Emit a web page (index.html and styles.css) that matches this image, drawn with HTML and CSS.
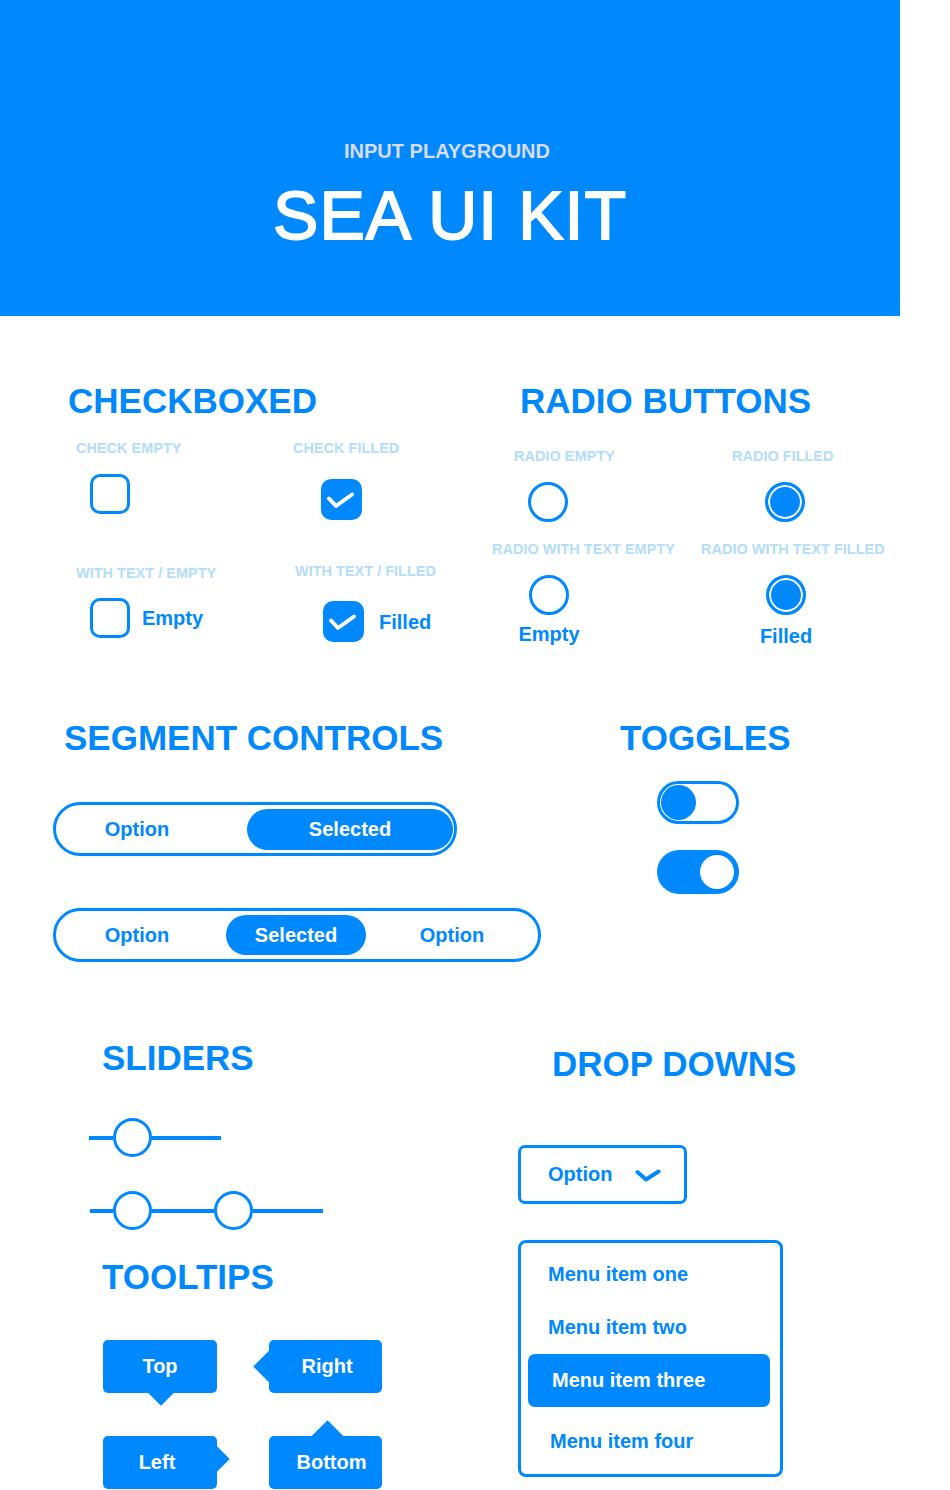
FILE: index.html
```html
<!DOCTYPE html>
<html lang="en">
<head>
<meta charset="utf-8">
<title>Sea UI Kit</title>
<link rel="stylesheet" href="styles.css">
</head>
<body>
<header class="hero">
  <p class="hero-sub">INPUT PLAYGROUND</p>
  <h1 class="hero-title">SEA UI KIT</h1>
</header>

<main class="page">
  <div class="row row-1">
    <section class="col-checks">
      <h2 class="heading">CHECKBOXED</h2>
      <div class="check-grid">
        <div class="cell cell-a">
          <div class="label">CHECK EMPTY</div>
          <span class="box"></span>
        </div>
        <div class="cell cell-b">
          <div class="label">CHECK FILLED</div>
          <span class="box on"><svg width="41" height="41" viewBox="0 0 41 41"><polyline points="8,19.5 15,27 31,15.5" fill="none" stroke="#fff" stroke-width="4" stroke-linecap="round" stroke-linejoin="round"/></svg></span>
        </div>
        <div class="cell cell-c">
          <div class="label">WITH TEXT / EMPTY</div>
          <div class="check-line">
            <span class="box"></span>
            <span class="check-text">Empty</span>
          </div>
        </div>
        <div class="cell cell-d">
          <div class="label">WITH TEXT / FILLED</div>
          <div class="check-line">
            <span class="box on"><svg width="41" height="41" viewBox="0 0 41 41"><polyline points="8,19.5 15,27 31,15.5" fill="none" stroke="#fff" stroke-width="4" stroke-linecap="round" stroke-linejoin="round"/></svg></span>
            <span class="check-text">Filled</span>
          </div>
        </div>
      </div>
    </section>

    <section class="col-radios">
      <h2 class="heading">RADIO BUTTONS</h2>
      <div class="radio-grid">
        <div class="cell r-1">
          <div class="label">RADIO EMPTY</div>
          <span class="radio"></span>
        </div>
        <div class="cell r-2">
          <div class="label">RADIO FILLED</div>
          <span class="radio on"></span>
        </div>
        <div class="cell r-3">
          <div class="label">RADIO WITH TEXT EMPTY</div>
          <div class="radio-item">
            <span class="radio"></span>
            <span class="radio-text">Empty</span>
          </div>
        </div>
        <div class="cell r-4">
          <div class="label">RADIO WITH TEXT FILLED</div>
          <div class="radio-item">
            <span class="radio on"></span>
            <span class="radio-text">Filled</span>
          </div>
        </div>
      </div>
    </section>
  </div>

  <div class="row row-2">
    <section class="col-seg">
      <h2 class="heading">SEGMENT CONTROLS</h2>
      <div class="segment seg-two">
        <span class="seg-opt">Option</span>
        <span class="seg-sel">Selected</span>
      </div>
      <div class="segment seg-three">
        <span class="seg-opt">Option</span>
        <span class="seg-sel">Selected</span>
        <span class="seg-opt seg-opt-r">Option</span>
      </div>
    </section>

    <section class="col-toggles">
      <h2 class="heading">TOGGLES</h2>
      <div class="toggle"><span class="knob"></span></div>
      <div class="toggle on"><span class="knob"></span></div>
    </section>
  </div>

  <div class="row row-3">
    <section class="col-left">
      <h2 class="heading">SLIDERS</h2>
      <div class="slider slider-1">
        <span class="track" style="width:24px"></span>
        <span class="thumb"></span>
        <span class="track" style="width:69px"></span>
      </div>
      <div class="slider slider-2">
        <span class="track" style="width:23px"></span>
        <span class="thumb"></span>
        <span class="track" style="width:62px"></span>
        <span class="thumb"></span>
        <span class="track" style="width:70px"></span>
      </div>

      <h2 class="heading tooltips-heading">TOOLTIPS</h2>
      <div class="tip-grid">
        <div class="tip tip-top">Top</div>
        <div class="tip tip-right">Right</div>
        <div class="tip tip-left">Left</div>
        <div class="tip tip-bottom">Bottom</div>
      </div>
    </section>

    <section class="col-right">
      <h2 class="heading">DROP DOWNS</h2>
      <div class="dropdown">
        <span>Option</span>
        <svg width="26" height="14" viewBox="0 0 26 14"><polyline points="2.5,3 11,10.5 23.5,2.5" fill="none" stroke="#0088ff" stroke-width="4" stroke-linecap="round" stroke-linejoin="round"/></svg>
      </div>
      <div class="menu">
        <div class="menu-item">Menu item one</div>
        <div class="menu-item">Menu item two</div>
        <div class="menu-item active">Menu item three</div>
        <div class="menu-item last">Menu item four</div>
      </div>
    </section>
  </div>
</main>
</body>
</html>
```

FILE: styles.css
```css
* { box-sizing: border-box; }

body {
  margin: 0;
  background: #ffffff;
  font-family: "Liberation Sans", Arial, sans-serif;
  color: #0088ff;
}

/* ---------- header ---------- */
.hero {
  width: 900px;
  height: 316px;
  background: #0088ff;
  padding-top: 139px;
  text-align: center;
}
.hero-sub {
  margin: 0;
  font-size: 20px;
  line-height: 24px;
  font-weight: 700;
  color: #d8dcf6;
  padding-right: 6px;
}
.hero-title {
  margin: 16px 0 0;
  font-size: 68px;
  line-height: 72px;
  font-weight: 400;
  letter-spacing: 1px;
  -webkit-text-stroke: 1.8px #ffffff;
  color: #ffffff;
}

/* ---------- common ---------- */
.heading {
  margin: 0;
  font-size: 35px;
  line-height: 40px;
  font-weight: 700;
  color: #0088ff;
  white-space: nowrap;
}
.label {
  font-size: 14.5px;
  line-height: 18px;
  font-weight: 700;
  color: #b3ddfc;
  white-space: nowrap;
}
.row { display: flex; }

/* ---------- row 1 ---------- */
.row-1 { padding-top: 65px; }
.col-checks { width: 492px; padding-left: 68px; }
.col-radios { flex: 1; }
.col-radios .heading { margin-left: 28px; }

.check-grid {
  display: grid;
  grid-template-columns: 217px 200px;
  row-gap: 42px;
  margin: 18px 0 0 8px;
  align-items: start;
}
.cell { display: flex; flex-direction: column; align-items: flex-start; }

.box {
  display: block;
  width: 40px;
  height: 40px;
  border: 3.5px solid #0088ff;
  border-radius: 10px;
}
.box.on {
  width: 41px;
  height: 41px;
  border: none;
  background: #0088ff;
}
.box svg { display: block; }

.cell-a .box { margin: 17px 0 0 14px; }
.cell-b .box { margin: 22px 0 0 28px; }
.cell-c .label { margin-top: 2px; }
.cell-c .check-line { margin: 16px 0 0 14px; }
.cell-d .label { margin-left: 2px; }
.cell-d .check-line { margin: 21px 0 0 30px; }

.check-line { display: flex; align-items: center; }
.check-text {
  font-size: 20px;
  font-weight: 700;
  line-height: 24px;
}
.cell-c .check-text { margin-left: 12px; }
.cell-d .check-text { margin-left: 15px; }

.radio-grid {
  display: grid;
  grid-template-columns: 209px 200px;
  row-gap: 18px;
  margin-top: 26px;
  align-items: start;
}
.radio {
  display: block;
  width: 40px;
  height: 40px;
  border: 3.5px solid #0088ff;
  border-radius: 50%;
}
.radio.on {
  background: #0088ff;
  box-shadow: inset 0 0 0 2px #ffffff;
}
.r-1 .label { margin-left: 22px; }
.r-1 .radio { margin: 17px 0 0 36px; }
.r-2 .label { margin-left: 31px; }
.r-2 .radio { margin: 17px 0 0 64px; }

.radio-item {
  display: flex;
  flex-direction: column;
  align-items: center;
  width: 80px;
  margin-top: 17px;
}
.r-3 .radio-item { margin-left: 17px; }
.r-4 .radio-item { margin-left: 45px; }
.radio-text {
  font-size: 20px;
  line-height: 24px;
  font-weight: 700;
}
.r-3 .radio-text { margin-top: 7px; }
.r-4 .radio-text { margin-top: 9px; }

/* ---------- row 2 ---------- */
.row-2 { padding-top: 70px; }
.col-seg { width: 560px; padding-left: 53px; }
.col-seg .heading { margin-left: 11px; }
.col-toggles { flex: 1; }
.col-toggles .heading { margin-left: 60px; }

.segment {
  display: flex;
  align-items: center;
  height: 54px;
  border: 3px solid #0088ff;
  border-radius: 27px;
  font-size: 20px;
  font-weight: 700;
}
.seg-opt { text-align: center; color: #0088ff; }
.seg-sel {
  display: flex;
  align-items: center;
  justify-content: center;
  height: 41px;
  border-radius: 21px;
  background: #0088ff;
  color: #ffffff;
}
.seg-two { width: 404px; margin-top: 44px; padding-right: 1px; }
.seg-two .seg-opt { width: 162px; }
.seg-two .seg-sel { width: 206px; margin-left: auto; }

.seg-three { width: 488px; margin-top: 52px; }
.seg-three .seg-opt { width: 162px; }
.seg-three .seg-sel { width: 140px; height: 40px; margin-left: 8px; }
.seg-three .seg-opt-r { width: 172px; }

.toggle {
  display: flex;
  align-items: center;
  width: 82px;
  height: 43px;
  margin-left: 37px;
  border: 3px solid #0088ff;
  border-radius: 22px;
  padding: 0 1px;
}
.toggle .knob {
  display: block;
  width: 35px;
  height: 35px;
  border-radius: 50%;
  background: #0088ff;
}
.col-toggles .toggle { margin-left: 97px; margin-top: 23px; }
.col-toggles .toggle.on {
  margin-top: 26px;
  height: 44px;
  border: none;
  background: #0088ff;
  justify-content: flex-end;
  padding: 0 5px;
}
.toggle.on .knob {
  width: 34px;
  height: 34px;
  background: #ffffff;
}

/* ---------- row 3 ---------- */
.row-3 { padding-top: 76px; }
.col-left { width: 500px; }
.col-left .heading { margin-left: 102px; }
.col-right { flex: 1; }
.col-right .heading { margin: 6px 0 0 52px; }

.slider { display: flex; align-items: center; height: 39px; }
.slider-1 { margin: 40px 0 0 89px; }
.slider-2 { margin: 34px 0 0 90px; }
.track { display: block; height: 4px; background: #0088ff; }
.thumb {
  display: block;
  width: 39px;
  height: 39px;
  border: 3.5px solid #0088ff;
  border-radius: 50%;
  background: #ffffff;
}

.col-left .tooltips-heading { margin-top: 27px; }

.tip-grid {
  display: grid;
  grid-template-columns: 114px 113px;
  column-gap: 52px;
  row-gap: 43px;
  margin: 43px 0 0 103px;
}
.tip {
  position: relative;
  display: flex;
  align-items: center;
  justify-content: center;
  height: 53px;
  border-radius: 5px;
  background: #0088ff;
  color: #ffffff;
  font-size: 20px;
  font-weight: 700;
}
.tip::after {
  content: "";
  position: absolute;
  width: 18px;
  height: 18px;
  background: #0088ff;
  transform: rotate(45deg);
}
.tip-top::after { left: 50%; bottom: -9px; margin-left: -8px; }
.tip-right { padding-left: 3px; }
.tip-right::after {
  width: 23px; height: 23px;
  left: -11.5px; top: 50%; margin-top: -11.5px;
}
.tip-left { padding-right: 6px; }
.tip-left::after { right: -9px; top: 50%; margin-top: -13px; }
.tip-bottom { padding-left: 12px; }
.tip-bottom::after {
  width: 23px; height: 23px;
  top: -11.5px; left: 50%; margin-left: -10px;
}

.dropdown {
  display: flex;
  align-items: center;
  justify-content: space-between;
  width: 169px;
  height: 59px;
  margin: 61px 0 0 18px;
  padding: 0 23px 0 27px;
  border: 3px solid #0088ff;
  border-radius: 7px;
  font-size: 20px;
  font-weight: 700;
}
.dropdown svg { display: block; margin-top: 2px; }

.menu {
  width: 265px;
  margin: 36px 0 0 18px;
  padding: 5px 10px 6px 7px;
  border: 3px solid #0088ff;
  border-radius: 8px;
}
.menu-item {
  display: flex;
  align-items: center;
  height: 53px;
  padding-left: 20px;
  font-size: 20px;
  font-weight: 700;
  color: #0088ff;
}
.menu-item.active {
  padding-left: 24px;
  border-radius: 7px;
  background: #0088ff;
  color: #ffffff;
}
.menu-item.last { margin-top: 8px; padding-left: 22px; }
```
